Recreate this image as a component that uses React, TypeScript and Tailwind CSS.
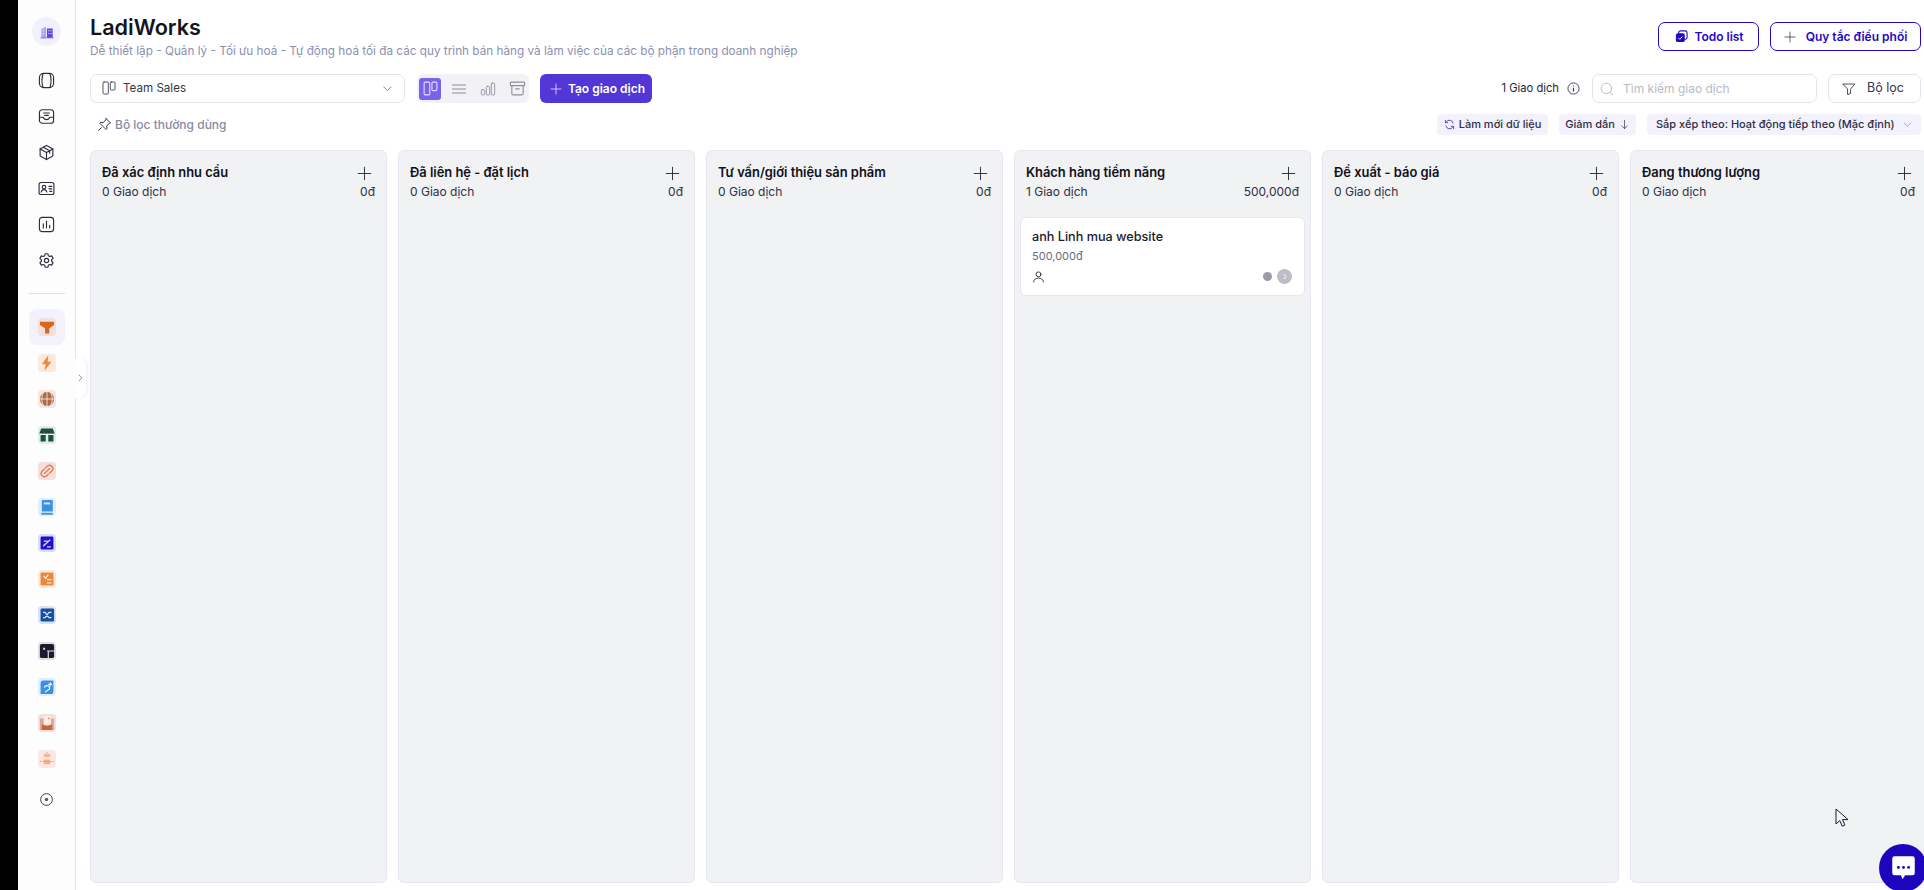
import React from "react";

type P = { className?: string };
const S = ({ className, children, sw = 1.5 }: P & { children: React.ReactNode; sw?: number }) => (
  <svg viewBox="0 0 24 24" fill="none" stroke="currentColor" strokeWidth={sw} strokeLinecap="round" strokeLinejoin="round" className={className}>
    {children}
  </svg>
);

const Plus = ({ className }: P) => (
  <S className={className} sw={1.4}><path d="M12 2v20M2 12h20" /></S>
);
const Chevron = ({ className }: P) => (
  <S className={className}><path d="M5 9l7 7 7-7" /></S>
);
const Board = ({ className }: P) => (
  <S className={className} sw={1.5}>
    <rect x="3" y="3" width="8" height="18" rx="1.5" />
    <rect x="14" y="3" width="7" height="12" rx="1.5" />
  </S>
);

const navIcons = [
  <S key="a" className="w-[17px] h-[17px]" sw={1.6}>
    <rect x="2" y="2" width="20" height="20" rx="6" />
    <path d="M7 2.500c-1.500 5-1.500 14 0 19M17 2.500c1.500 5 1.500 14 0 19" />
  </S>,
  <S key="b" className="w-[17px] h-[17px]" sw={1.6}>
    <rect x="2" y="2.500" width="20" height="19" rx="4" />
    <path d="M2 13h5.500c.5 2 2 3.500 4.500 3.500s4-1.500 4.500-3.500H22M8 7h8M9.500 10.500h5" />
  </S>,
  <S key="c" className="w-[17px] h-[17px]" sw={1.6}>
    <path d="M12 2l9 5v10l-9 5-9-5V7l9-5z" />
    <path d="M3 7l9 5 9-5M12 12v10M7.500 4.500l9 5v3.500" />
  </S>,
  <S key="d" className="w-[17px] h-[17px]" sw={1.6}>
    <rect x="1.500" y="3.500" width="21" height="17" rx="3" />
    <circle cx="8.500" cy="10" r="2.500" />
    <path d="M4.500 17c.5-2.500 2-3.500 4-3.500s3.500 1 4 3.500M15.500 9h4M15.500 12.500h4M16.500 16h3" />
  </S>,
  <S key="e" className="w-[17px] h-[17px]" sw={1.6}>
    <rect x="2" y="2" width="20" height="20" rx="4" />
    <path d="M7.500 17v-6M12 17V7M16.500 17v-4" />
  </S>,
  <S key="f" className="w-[17px] h-[17px]" sw={1.6}>
    <path d="M10 2.500h4l.6 2.800 2 1.100 2.700-.9 2 3.500-2.100 1.900v2.200l2.100 1.900-2 3.500-2.700-.9-2 1.100-.6 2.800h-4l-.6-2.800-2-1.100-2.700.9-2-3.500 2.100-1.900V11L2.700 9 4.700 5.500l2.700.9 2-1.100.6-2.800z" />
    <circle cx="12" cy="12" r="3" />
  </S>,
];

const Tile = ({ bg, children }: { bg: string; children: React.ReactNode }) => (
  <div className={`w-[18px] h-[18px] rounded-[4px] flex items-center justify-center ${bg}`}>
    <svg viewBox="2 2 14 14" className="w-[18px] h-[18px]">{children}</svg>
  </div>
);

const apps = [
  <Tile key="1" bg="bg-[#f6dfdb]"><path d="M3.500 5h11v2.500l-3.700 2.500V14H7.500V10L3.500 7.500z" fill="#d2691e" /></Tile>,
  <Tile key="2" bg="bg-[#fbe9dc]"><path d="M10 3L5 10h3l-1 5 5.500-7H9.500z" fill="#e98a3c" /></Tile>,
  <Tile key="3" bg="bg-[#f6e6dd]">
    <circle cx="9" cy="9" r="5.500" fill="#a9694a" />
    <path d="M3.500 9h11M9 3.500v11M6 4.500c-1.500 3-1.500 6 0 9M12 4.500c1.500 3 1.500 6 0 9" stroke="#f6e6dd" strokeWidth=".7" fill="none" />
  </Tile>,
  <Tile key="4" bg="bg-[#dfeee5]">
    <path d="M4.500 4h9L15 8H3z" fill="#1f4f43" /><path d="M4 9h4v5H4zM10 9h4v5h-4z" fill="#1f4f43" />
    <path d="M3.500 8.500h11" stroke="#fff" strokeWidth=".8" strokeDasharray="1.500 1" />
  </Tile>,
  <Tile key="5" bg="bg-[#f7dedb]">
    <path d="M8 6.500l1.500-1.500a2.600 2.600 0 013.600 3.600l-2 2M10 11.500L8.500 13A2.600 2.600 0 014.900 9.400l2-2M7 11l4-4" stroke="#d2855f" strokeWidth="1.100" fill="none" strokeLinecap="round" />
  </Tile>,
  <Tile key="6" bg="bg-[#deeffd]">
    <path d="M5 3.500h8a.5.5 0 01.5.5v8.500H5z" fill="#3f8fe0" /><path d="M4.500 13.500h9V15h-9z" fill="#3f8fe0" />
    <path d="M6.500 5.500h5v1.500h-5z" fill="#cfe6fb" />
  </Tile>,
  <Tile key="7" bg="bg-[#dcdcf5]">
    <rect x="4" y="4" width="10" height="10" rx="1" fill="#2410c8" />
    <path d="M6 11.500l5.500-5M6.500 7.500h3M6.500 10h1.500M9 12h3" stroke="#d8d6fb" strokeWidth=".9" fill="none" />
  </Tile>,
  <Tile key="8" bg="bg-[#fbe8dc]">
    <path d="M4 4h10v10H4z" fill="#e58a3e" />
    <path d="M6.500 6.500l1.500 2 2-3M9 9.500h3.500M9 12h3.500" stroke="#fbe8dc" strokeWidth="1" fill="none" />
  </Tile>,
  <Tile key="9" bg="bg-[#d9e3f5]">
    <rect x="4" y="4" width="10.500" height="10" rx="1" fill="#174ea6" />
    <path d="M6 7h1.500l3 4H12.500M6 11h1.500l3-4H12.500" stroke="#dce6f7" strokeWidth=".9" fill="none" />
  </Tile>,
  <Tile key="10" bg="bg-[#dedee2]">
    <rect x="3.500" y="3.500" width="11" height="11" rx="1.500" fill="#1a1a2e" />
    <path d="M9 9h5.500M10 9v5.500" stroke="#dedee2" strokeWidth=".9" /><rect x="6" y="6.500" width="1.500" height="1.500" fill="#dedee2" />
  </Tile>,
  <Tile key="11" bg="bg-[#deeffd]">
    <path d="M5.500 4H14v8.500a2 2 0 01-2 2H4V6a2 2 0 011.500-2z" fill="#3f8fe0" />
    <path d="M7 9.500a2 2 0 114 1l-3.500 2.500M11.500 5.500v3M10 7h3" stroke="#fff" strokeWidth=".9" fill="none" />
  </Tile>,
  <Tile key="12" bg="bg-[#f5dfdc]">
    <path d="M3.500 5.500h11v9h-11z" fill="#d9a99b" /><path d="M5 10l4 1.500L13 10v4.500H5z" fill="#c4683c" />
    <rect x="6.500" y="3.500" width="5.500" height="7" fill="#f9ece8" /><rect x="10" y="5" width="1" height="1" fill="#d2691e" />
  </Tile>,
  <Tile key="13" bg="bg-[#fde6e3]">
    <rect x="6.500" y="5" width="5" height="2.500" fill="#f3b98f" /><rect x="6.500" y="9.500" width="5" height="3.500" fill="#f3b07c" />
    <path d="M3.500 11h11M9 3.500v1.500" stroke="#eaa37a" strokeWidth=".8" strokeDasharray="1.200 .8" />
  </Tile>,
];

const columns = [
  { title: "Đã xác định nhu cầu", count: "0 Giao dịch", amount: "0đ" },
  { title: "Đã liên hệ - đặt lịch", count: "0 Giao dịch", amount: "0đ" },
  { title: "Tư vấn/giới thiệu sản phẩm", count: "0 Giao dịch", amount: "0đ" },
  { title: "Khách hàng tiềm năng", count: "1 Giao dịch", amount: "500,000đ", card: true },
  { title: "Đề xuất - báo giá", count: "0 Giao dịch", amount: "0đ" },
  { title: "Đang thương lượng", count: "0 Giao dịch", amount: "0đ" },
];

function Sidebar() {
  return (
    <aside className="relative w-[58px] shrink-0 h-full border-r border-[#e6e6ee] bg-[#fdfdfe] flex flex-col items-center pt-[17px]">
      <div className="w-[29px] h-[29px] rounded-full bg-[#f1f0fd] flex items-center justify-center">
        <svg viewBox="0 0 16 16" className="w-[14px] h-[14px]">
          <path d="M1.500 4.500L7 2v12.500H1.500z" fill="#a9a3f5" />
          <path d="M8 4h6.500v10.500H8z" fill="#5a46e0" />
          <path d="M9.500 6h1.200v1.200H9.500zM12 6h1.200v1.200H12zM9.500 9h1.200v1.200H9.500zM12 9h1.200v1.200H12zM3 6h1.500v1.200H3zM3 9h1.500v1.200H3z" fill="#fff" />
          <path d="M.5 14.700h15" stroke="#5a46e0" strokeWidth=".8" />
        </svg>
      </div>
      <div className="mt-[26px] flex flex-col gap-[19px] text-[#2d2d3f]">
        {navIcons.map((ic, i) => <div key={i} className="w-[17px] h-[17px]">{ic}</div>)}
      </div>
      <div className="mt-[24px] w-[36px] h-px bg-[#dcdce4]" />
      <div className="mt-[15px] w-[36px] h-[36px] rounded-[8px] bg-[#f3f2fc] flex items-center justify-center">{apps[0]}</div>
      <div className="mt-[9px] flex flex-col gap-[18px]">
        {apps.slice(1).map((a, i) => <div key={i}>{a}</div>)}
      </div>
      <div className="mt-[25px] text-[#2d2d3f]">
        <svg viewBox="0 0 14 14" className="w-[13px] h-[13px]" fill="none">
          <circle cx="7" cy="7" r="6.300" stroke="currentColor" strokeWidth="1" />
          <circle cx="7" cy="7" r="1.800" fill="#555566" />
        </svg>
      </div>
      <div className="absolute left-[57px] top-[358px] w-[11px] h-[40px] rounded-r-[8px] bg-white shadow-[2px_0_3px_rgba(30,30,60,0.06)] flex items-center justify-center text-[#7b7b95]">
        <svg viewBox="0 0 8 12" className="w-[5px] h-[8px]" fill="none" stroke="currentColor" strokeWidth="1.300"><path d="M1.500 1l4.500 5-4.500 5" /></svg>
      </div>
    </aside>
  );
}

function Column({ title, count, amount, card }: { title: string; count: string; amount: string; card?: boolean }) {
  return (
    <section className="w-[297px] shrink-0 h-[733px] rounded-[6px] border border-[#e6e6f0] bg-[#f1f2f4] px-[5px]">
      <div className="px-[6px] pt-[13px] h-[66px]">
        <div className="flex items-center justify-between h-[18px] pr-[4px]">
          <span className="text-[12.900px] font-semibold text-[#101018] leading-[18px]">{title}</span>
          <Plus className="w-[15px] h-[15px] text-[#1c1c2e] -mr-[1px]" />
        </div>
        <div className="mt-[2px] flex items-center justify-between text-[12px] leading-[16px] text-[#2e2e44]">
          <span>{count}</span><span>{amount}</span>
        </div>
      </div>
      {card && (
        <div className="h-[79px] rounded-[6px] border border-[#e6e6f0] bg-white px-[11px] pt-[10px]">
          <div className="text-[12.650px] font-medium leading-[18px] text-[#1b1b2b]">anh Linh mua website</div>
          <div className="mt-[2px] text-[11px] leading-[16px] text-[#6b6b7f]">500,000đ</div>
          <div className="mt-[5px] flex items-center justify-between">
            <S className="w-[13px] h-[13px] text-[#2b2b3d]" sw={1.700}>
              <circle cx="12" cy="8" r="4.500" /><path d="M3 22c.5-5 4-7 9-7s8.500 2 9 7" />
            </S>
            <div className="flex items-center gap-[5px] mr-[1px]">
              <span className="w-[9px] h-[9px] rounded-full bg-[#9a9aab]" />
              <span className="w-[15px] h-[15px] rounded-full bg-[#bdbdca] flex items-center justify-center">
                <svg viewBox="0 0 8 12" className="w-[4px] h-[7px]" fill="none" stroke="#fff" strokeWidth="2"><path d="M1.500 1l4.500 5-4.500 5" /></svg>
              </span>
            </div>
          </div>
        </div>
      )}
    </section>
  );
}

function Toolbar() {
  return (
    <div className="flex items-center justify-between h-[29px] mt-[7px] pr-[3px]">
      <div className="flex items-center">
        <div className="w-[315px] h-[29px] rounded-[7px] border border-[#e4e4f0] bg-white flex items-center justify-between pl-[10px] pr-[10px]">
          <div className="flex items-center gap-[6px]">
            <Board className="w-[16px] h-[16px] text-[#55556b]" />
            <span className="text-[11.600px] text-[#35354a]">Team Sales</span>
          </div>
          <Chevron className="w-[13px] h-[13px] text-[#6d6d80]" />
        </div>
        <div className="ml-[12px] w-[112px] h-[29px] rounded-[6px] bg-[#f2f2f6] flex items-center pl-[2px] gap-[7px] text-[#8d8da0]">
          <div className="w-[22px] h-[22px] rounded-[3px] bg-[#7a62ea] flex items-center justify-center text-[#e6e2fb]"><Board className="w-[17px] h-[17px]" /></div>
          <div className="w-[22px] flex justify-center"><S className="w-[16px] h-[16px]"><path d="M2 6h20M2 12h20M2 18h20" /></S></div>
          <div className="w-[22px] flex justify-center"><S className="w-[16px] h-[16px]" sw={1.300}><rect x="2" y="13" width="5" height="8" rx="1.500" /><rect x="9.500" y="8" width="5" height="13" rx="1.500" /><rect x="17" y="3" width="5" height="18" rx="1.500" /></S></div>
          <div className="w-[22px] flex justify-center"><S className="w-[17px] h-[17px]" sw={1.600}><rect x="2" y="3" width="20" height="5" rx="1" /><path d="M4 8v11a2 2 0 002 2h12a2 2 0 002-2V8M9.500 12.500h5" /></S></div>
        </div>
        <button className="ml-[11px] w-[112px] h-[29px] rounded-[6px] bg-[#5236d6] text-white flex items-center justify-center gap-[6px] pl-[3px] text-[12px] font-semibold">
          <Plus className="w-[12px] h-[12px]" /><span>Tạo giao dịch</span>
        </button>
      </div>
      <div className="flex items-center">
        <span className="text-[11.200px] text-[#25253a]">1 Giao dịch</span>
        <svg viewBox="0 0 14 14" className="ml-[8px] w-[13px] h-[13px] text-[#3d3d50]" fill="none" stroke="currentColor" strokeWidth="1">
          <circle cx="7" cy="7" r="6" /><path d="M7 6.200v4M7 3.800v1" strokeWidth="1.300" />
        </svg>
        <div className="ml-[12px] w-[225px] h-[29px] rounded-[7px] border border-[#e4e4f0] bg-white flex items-center pl-[7px] gap-[9px]">
          <S className="w-[14px] h-[14px] text-[#b3b3bf]" sw={1.500}><circle cx="11" cy="11" r="9" /><path d="M18 18l4 4" /></S>
          <span className="text-[12px] text-[#b9b9c4]">Tìm kiếm giao dịch</span>
        </div>
        <div className="ml-[11px] w-[93px] h-[29px] rounded-[7px] border border-[#e4e4f0] bg-white flex items-center justify-center gap-[11px] pr-[3px]">
          <S className="w-[14px] h-[14px] text-[#35354a]" sw={1.500}><path d="M2 3.500h20l-7.500 9V20l-5 1.500v-9z" /></S>
          <span className="text-[12.500px] text-[#35354a]">Bộ lọc</span>
        </div>
      </div>
    </div>
  );
}

function FilterRow() {
  return (
    <div className="flex items-center justify-between h-[21px] mt-[11px] pr-[3px]">
      <div className="flex items-center gap-[3px] pl-[7px]">
        <S className="w-[15px] h-[15px] text-[#25253a]" sw={1.500}>
          <path d="M14.500 2.500l7 7-2 .5-4 4.500.5 4-1.500 1.500-10-10L6 8.500l4 .5 4-4.500z" /><path d="M7 17l-4.500 4.500" />
        </S>
        <span className="text-[12px] font-medium text-[#8a8aa3]">Bộ lọc thường dùng</span>
      </div>
      <div className="flex items-center gap-[11px] text-[11px] font-medium text-[#2e2e44]">
        <div className="h-[21px] w-[111px] rounded-[4px] bg-[#f3f2fc] flex items-center justify-center gap-[4px]">
          <S className="w-[11px] h-[11px] text-[#4b3fd6]" sw={2}><path d="M20 9a8.500 8.500 0 00-15-3l-2 2M4 15a8.500 8.500 0 0015 3l2-2M3 3v5h5M21 21v-5h-5" /></S>
          <span>Làm mới dữ liệu</span>
        </div>
        <div className="h-[21px] w-[77px] rounded-[4px] bg-[#f3f2fc] flex items-center justify-center gap-[4px]">
          <span>Giảm dần</span>
          <S className="w-[11px] h-[11px]" sw={1.500}><path d="M12 3v18M6 15l6 6 6-6" /></S>
        </div>
        <div className="h-[21px] w-[274px] rounded-[4px] bg-[#f3f2fc] flex items-center justify-between pl-[9px] pr-[8px]">
          <span>Sắp xếp theo: Hoạt động tiếp theo (Mặc định)</span>
          <Chevron className="w-[11px] h-[11px] text-[#8a8a9c]" />
        </div>
      </div>
    </div>
  );
}

export default function App() {
  return (
    <div className="relative w-[1924px] h-[890px] overflow-hidden bg-white flex font-['Inter','Noto_Sans',sans-serif]">
      <div className="w-[18px] h-full shrink-0 bg-black" />
      <Sidebar />
      <main className="flex-1 min-w-0 pl-[14px] overflow-hidden">
        <header className="flex items-start justify-between pt-[14px] h-[67px] pr-[3px]">
          <div>
            <h1 className="text-[21.600px] font-semibold leading-[26px] text-[#14141f]">LadiWorks</h1>
            <p className="mt-[3px] text-[11.750px] leading-[16px] text-[#8a8fb0]">Dễ thiết lập - Quản lý - Tối ưu hoá - Tự động hoá tối đa các quy trình bán hàng và làm việc của các bộ phận trong doanh nghiệp</p>
          </div>
          <div className="flex items-center gap-[11px] mt-[8px]">
            <button className="w-[101px] h-[29px] rounded-[7px] border border-[#1f0ac4] bg-white flex items-center justify-center gap-[6px] pl-[2px] text-[12px] font-semibold text-[#1f0ac4]">
              <svg viewBox="0 0 14 14" className="w-[13px] h-[13px]">
                <rect x="4" y="1" width="9" height="9" rx="2" fill="none" stroke="#1f0ac4" strokeWidth="1.200" />
                <rect x="1" y="3.500" width="9.500" height="9.500" rx="2" fill="#1f0ac4" />
                <path d="M3.500 8.500l1.500 1.500 3-3" stroke="#fff" fill="none" strokeWidth="1" />
              </svg>
              <span>Todo list</span>
            </button>
            <button className="w-[151px] h-[29px] rounded-[7px] border border-[#1f0ac4] bg-white flex items-center justify-center gap-[10px] text-[12px] font-semibold text-[#1f0ac4]">
              <Plus className="w-[12px] h-[12px] text-[#1f1f35]" />
              <span>Quy tắc điều phối</span>
            </button>
          </div>
        </header>
        <Toolbar />
        <FilterRow />
        <div className="mt-[15px] flex gap-[11px]">
          {columns.map((c) => <Column key={c.title} {...c} />)}
        </div>
      </main>
      <svg viewBox="0 0 14 20" className="absolute left-[1835px] top-[808px] w-[14px] h-[20px]">
        <path d="M1 1v15l3.800-3.400 2.400 5.600 2.700-1.200-2.400-5.400H13z" fill="#f4f5f8" stroke="#1a1a2e" strokeWidth="1" strokeLinejoin="round" />
      </svg>
      <div className="absolute left-[1879px] top-[844px] w-[48px] h-[48px] rounded-full bg-[#1c05bd] flex items-center justify-center">
        <svg viewBox="0 0 24 24" className="w-[27px] h-[27px]">
          <path d="M4 1h16a2 2 0 012 2v13a2 2 0 01-2 2h-6.500L11 21.500 9.800 18H4a2 2 0 01-2-2V3a2 2 0 012-2z" fill="#fff" />
          <circle cx="7.500" cy="11" r="1.300" fill="#1c05bd" /><circle cx="12" cy="11" r="1.300" fill="#1c05bd" /><circle cx="16.500" cy="11" r="1.300" fill="#1c05bd" />
        </svg>
      </div>
    </div>
  );
}
